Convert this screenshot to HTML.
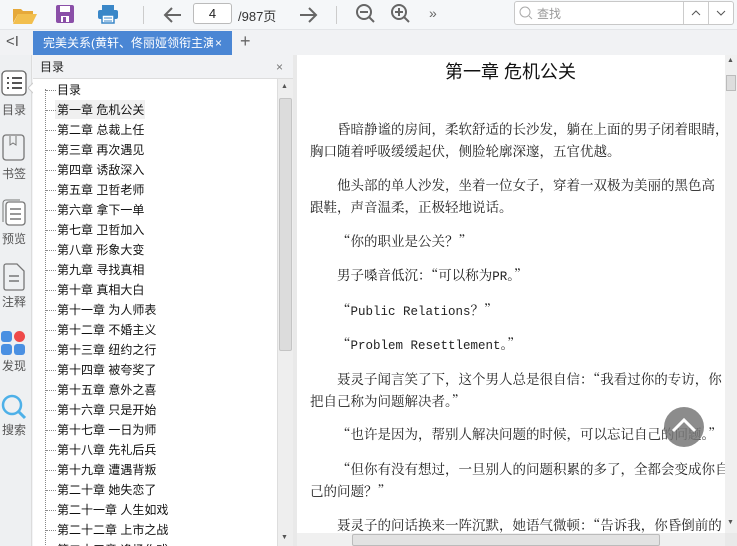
<!DOCTYPE html>
<html><head><meta charset="utf-8"><style>
*{margin:0;padding:0;box-sizing:border-box}
html,body{width:737px;height:546px;overflow:hidden}
body{background:#f3f4f6;font-family:"Liberation Sans","Noto Sans CJK SC",sans-serif;position:relative;font-size:12px;color:#222}
.abs{position:absolute}
#tb{left:0;top:0;width:737px;height:30px;background:#f5f7f9;border-bottom:1px solid #e3e5e8}
#tabs{left:0;top:30px;width:737px;height:25px;background:#f1f2f4}
#tab{left:33px;top:31px;width:199px;height:24px;background:#4a86d4;color:#fff;font-size:12px;line-height:24px;padding-left:10px;white-space:nowrap;overflow:hidden}
#side{left:0;top:55px;width:32px;height:491px;background:#eef0f2;border-right:1px solid #dcdcdc}
.si{position:absolute;left:0;width:28px;text-align:center;font-size:12px;color:#555}
#tochd{left:33px;top:55px;width:260px;height:24px;background:#f1f2f4;border-bottom:1px solid #ddd;font-size:12px;line-height:24px;padding-left:7px}
#toc{left:33px;top:79px;width:244px;height:467px;background:#fff;overflow:hidden}
.ti{position:absolute;left:24px;font-size:12px;line-height:20px;white-space:nowrap;color:#111}
.dh{position:absolute;left:13px;width:10px;border-top:1px dotted #888}
#vsb{left:277px;top:79px;width:16px;height:467px;background:#eeeeee;border-left:1px solid #ddd;overflow:hidden}
#main{left:293px;top:55px;width:444px;height:491px;background:#e9e9e9}
#page{left:297px;top:55px;width:428px;height:478px;background:#fff;overflow:hidden;font-family:"Noto Serif CJK SC","Liberation Serif",serif;font-size:13.5px;color:#222}
.p{position:absolute;left:13px;white-space:nowrap}
.m{font-family:"Liberation Mono",monospace;font-size:12.5px}
</style></head><body>
<div id="tb" class="abs">
<svg class="abs" style="left:12px;top:5px" width="26" height="20"><path d="M1 4h8l2 2h10v3H6L1 18z" fill="#e6a93a"/><path d="M6 9h19l-5 10H1z" fill="#f2bf4e"/></svg>
<svg class="abs" style="left:55px;top:4px" width="20" height="20"><rect x="1" y="1" width="18" height="18" rx="2" fill="#8a4fa8"/><rect x="5" y="2" width="10" height="6" fill="#fff"/><rect x="6" y="12" width="8" height="6" fill="#fff"/><rect x="8" y="13" width="3" height="5" fill="#8a4fa8"/></svg>
<svg class="abs" style="left:97px;top:4px" width="22" height="20"><rect x="5" y="1" width="12" height="5" fill="#3a87c8"/><rect x="1" y="6" width="20" height="9" rx="2" fill="#3a87c8"/><rect x="5" y="11" width="12" height="8" fill="#fff" stroke="#3a87c8" stroke-width="1.5"/><path d="M7 14h8M7 17h8" stroke="#3a87c8"/></svg>
<div class="abs" style="left:143px;top:6px;width:1px;height:18px;background:#ccc"></div>
<svg class="abs" style="left:163px;top:6px" width="20" height="18"><path d="M18 9H3M9 2L2 9l7 7" stroke="#666" stroke-width="2" fill="none"/></svg>
<div class="abs" style="left:193px;top:3px;width:39px;height:21px;border:1px solid #bbb;border-radius:3px;background:#fff;text-align:center;line-height:19px;font-size:13px">4</div>
<div class="abs" style="left:238px;top:6px;font-size:13px;color:#333">/987页</div>
<svg class="abs" style="left:298px;top:6px" width="20" height="18"><path d="M2 9h15M11 2l7 7-7 7" stroke="#666" stroke-width="2" fill="none"/></svg>
<div class="abs" style="left:336px;top:6px;width:1px;height:18px;background:#ccc"></div>
<svg class="abs" style="left:355px;top:3px" width="22" height="22"><circle cx="9" cy="9" r="7" stroke="#666" stroke-width="2" fill="none"/><path d="M5 9h8M14 14l5 5" stroke="#666" stroke-width="2"/></svg>
<svg class="abs" style="left:390px;top:3px" width="22" height="22"><circle cx="9" cy="9" r="7" stroke="#666" stroke-width="2" fill="none"/><path d="M5 9h8M9 5v8M14 14l5 5" stroke="#666" stroke-width="2"/></svg>
<div class="abs" style="left:429px;top:5px;font-size:14px;color:#666">»</div>
<div class="abs" style="left:514px;top:1px;width:220px;height:24px;border:1px solid #c8c8c8;border-radius:3px;background:#fff"></div>
<svg class="abs" style="left:519px;top:6px" width="14" height="14"><circle cx="6" cy="6" r="5" stroke="#aaa" fill="none"/><path d="M10 10l3 3" stroke="#aaa"/></svg>
<div class="abs" style="left:537px;top:5px;font-size:12px;color:#999">查找</div>
<div class="abs" style="left:683px;top:2px;width:1px;height:22px;background:#ccc"></div>
<div class="abs" style="left:708px;top:2px;width:1px;height:22px;background:#ccc"></div>
<svg class="abs" style="left:691px;top:10px" width="10" height="6"><path d="M1 5l4-4 4 4" stroke="#555" fill="none"/></svg>
<svg class="abs" style="left:716px;top:10px" width="10" height="6"><path d="M1 1l4 4 4-4" stroke="#555" fill="none"/></svg>
</div>
<div id="tabs" class="abs"></div>
<div class="abs" style="left:6px;top:33px;font-size:15px;color:#555">&lt;I</div>
<div id="tab" class="abs"><span style="display:inline-block;width:170px;overflow:hidden;vertical-align:top">完美关系(黄轩、佟丽娅领衔主演</span><span style="position:absolute;left:182px;top:0">×</span></div>
<div class="abs" style="left:240px;top:31px;font-size:18px;color:#666">+</div>
<div id="side" class="abs">
<svg class="abs" style="left:1px;top:15px" width="26" height="26"><rect x="1" y="1" width="24" height="24" rx="4" stroke="#666" fill="#fff" stroke-width="1.3"/><path d="M6 8h2M11 8h10M6 13h2M11 13h10M6 18h2M11 18h10" stroke="#555" stroke-width="2"/></svg>
<div class="si" style="top:46px">目录</div>
<svg class="abs" style="left:2px;top:79px" width="24" height="28"><rect x="1" y="1" width="21" height="25" rx="3" stroke="#777" fill="none" stroke-width="1.3"/><path d="M8 2v9l3-2 3 2V2" stroke="#777" fill="none"/></svg>
<div class="si" style="top:110px">书签</div>
<svg class="abs" style="left:1px;top:143px" width="26" height="28"><rect x="5" y="4" width="19" height="23" rx="3" stroke="#777" fill="#fff" stroke-width="1.3"/><path d="M2 24V5a3 3 0 0 1 3-3h14" stroke="#777" fill="none"/><path d="M9 11h11M9 16h11M9 21h11" stroke="#777" stroke-width="1.5"/></svg>
<div class="si" style="top:175px">预览</div>
<svg class="abs" style="left:3px;top:208px" width="22" height="28"><path d="M1 3a2 2 0 0 1 2-2h11l7 7v17a2 2 0 0 1-2 2H3a2 2 0 0 1-2-2z" stroke="#777" fill="none" stroke-width="1.3"/><path d="M6 13h10M6 18h10" stroke="#777" stroke-width="1.5"/></svg>
<div class="si" style="top:238px">注释</div>
<div class="abs" style="left:1px;top:276px;width:11px;height:11px;border-radius:3px;background:#4a90e2"></div>
<div class="abs" style="left:14px;top:276px;width:11px;height:11px;border-radius:50%;background:#ef4a4a"></div>
<div class="abs" style="left:1px;top:289px;width:11px;height:11px;border-radius:3px;background:#4a90e2"></div>
<div class="abs" style="left:14px;top:289px;width:11px;height:11px;border-radius:3px;background:#4a90e2"></div>
<div class="si" style="top:302px">发现</div>
<svg class="abs" style="left:1px;top:339px" width="26" height="26"><circle cx="11" cy="11" r="9" stroke="#4db0e8" stroke-width="2.5" fill="none"/><path d="M18 18l6 6" stroke="#4db0e8" stroke-width="3"/></svg>
<div class="si" style="top:366px">搜索</div>
</div>
<svg class="abs" style="left:28px;top:82px" width="6" height="12"><path d="M6 0L0 6l6 6" fill="#fff" stroke="#ccc"/></svg>
<div id="tochd" class="abs">目录<span style="position:absolute;left:243px;color:#777">×</span></div>
<div id="toc" class="abs">
<div class="abs" style="left:12px;top:10px;height:460px;border-left:1px dotted #888"></div>
<div class="abs" style="left:22px;top:21px;width:90px;height:19px;background:#f0f0f0"></div>
<div id="items"></div>
</div>
<div id="vsb" class="abs"><div class="abs" style="left:3px;top:4px;font-size:7px;color:#555">▲</div><div class="abs" style="left:1px;top:19px;width:13px;height:253px;background:#dcdcdc;border:1px solid #c4c4c4;border-radius:2px"></div><div class="abs" style="left:3px;top:455px;font-size:7px;color:#555">▼</div></div>
<div id="main" class="abs"></div>
<div id="page" class="abs">
<div class="p" style="left:148px;top:3px;font-family:'Liberation Sans','Noto Sans CJK SC',sans-serif;font-size:18px;color:#111">第一章 危机公关</div>
<div class="p" style="left:40px;top:63px">昏暗静谧的房间，柔软舒适的长沙发，躺在上面的男子闭着眼睛，</div>
<div class="p" style="top:85px">胸口随着呼吸缓缓起伏，侧脸轮廓深邃，五官优越。</div>
<div class="p" style="left:40px;top:119px">他头部的单人沙发，坐着一位女子，穿着一双极为美丽的黑色高</div>
<div class="p" style="top:141px">跟鞋，声音温柔，正极轻地说话。</div>
<div class="p" style="left:40px;top:175px">“你的职业是公关？”</div>
<div class="p" style="left:40px;top:209px">男子嗓音低沉：“可以称为<span class="m">PR</span>。”</div>
<div class="p" style="left:40px;top:244px">“<span class="m">Public Relations</span>？”</div>
<div class="p" style="left:40px;top:278px">“<span class="m">Problem Resettlement</span>。”</div>
<div class="p" style="left:40px;top:313px">聂灵子闻言笑了下，这个男人总是很自信：“我看过你的专访，你</div>
<div class="p" style="top:335px">把自己称为问题解决者。”</div>
<div class="p" style="left:40px;top:368px">“也许是因为，帮别人解决问题的时候，可以忘记自己的问题。”</div>
<div class="p" style="left:40px;top:403px">“但你有没有想过，一旦别人的问题积累的多了，全都会变成你自</div>
<div class="p" style="top:425px">己的问题？”</div>
<div class="p" style="left:40px;top:459px">聂灵子的问话换来一阵沉默，她语气微顿：“告诉我，你昏倒前的</div>
</div>
<div class="abs" style="left:664px;top:407px;width:40px;height:40px;border-radius:50%;background:rgba(120,120,120,0.85)"></div>
<svg class="abs" style="left:670px;top:416px" width="28" height="18"><path d="M3 15L14 4l11 11" stroke="#fff" stroke-width="3" fill="none"/></svg>
<div class="abs" style="left:725px;top:55px;width:12px;height:478px;background:#f0f0f0;overflow:hidden"><div class="abs" style="left:2px;top:2px;font-size:7px;color:#555">▲</div><div class="abs" style="left:1px;top:20px;width:10px;height:16px;background:#ddd;border:1px solid #bbb"></div><div class="abs" style="left:2px;top:464px;font-size:7px;color:#555">▼</div></div>
<div class="abs" style="left:297px;top:533px;width:428px;height:13px;background:#f0f0f0;overflow:hidden"><div class="abs" style="left:55px;top:1px;width:308px;height:12px;background:#e2e2e2;border:1px solid #bbb;border-radius:2px"></div></div>
<script>
var t=["目录","第一章 危机公关","第二章 总裁上任","第三章 再次遇见","第四章 诱敌深入","第五章 卫哲老师","第六章 拿下一单","第七章 卫哲加入","第八章 形象大变","第九章 寻找真相","第十章 真相大白","第十一章 为人师表","第十二章 不婚主义","第十三章 纽约之行","第十四章 被夸奖了","第十五章 意外之喜","第十六章 只是开始","第十七章 一日为师","第十八章 先礼后兵","第十九章 遭遇背叛","第二十章 她失恋了","第二十一章 人生如戏","第二十二章 上市之战","第二十三章 逢场作戏"];
var h="";for(var i=0;i<t.length;i++){var y=i*20+1;h+='<div class="dh" style="top:'+(y+10)+'px"></div><div class="ti" style="top:'+y+'px">'+t[i]+'</div>';}
document.getElementById("items").innerHTML=h;
</script>
</body></html>
